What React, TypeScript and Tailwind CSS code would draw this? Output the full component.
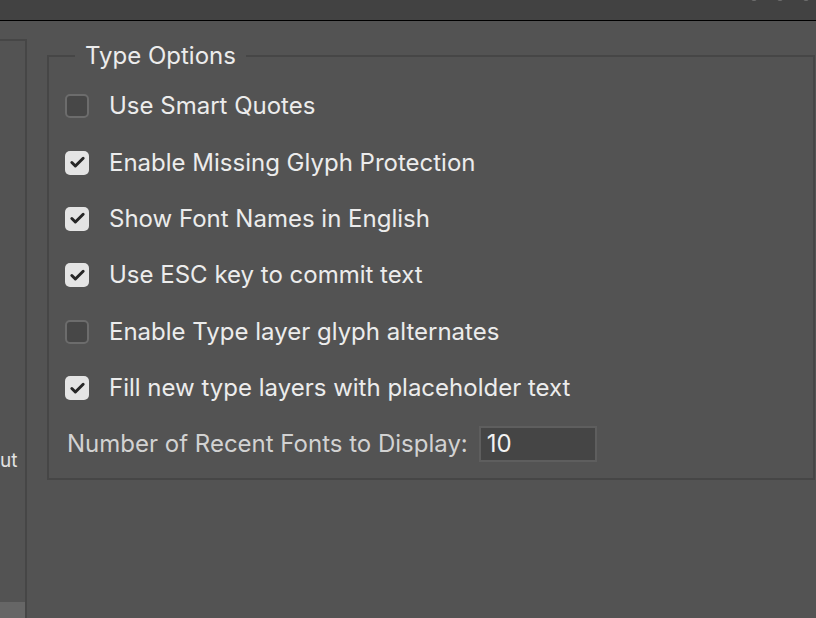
import { Check } from 'lucide-react';

const options = [
  { label: 'Use Smart Quotes', checked: false },
  { label: 'Enable Missing Glyph Protection', checked: true },
  { label: 'Show Font Names in English', checked: true },
  { label: 'Use ESC key to commit text', checked: true },
  { label: 'Enable Type layer glyph alternates', checked: false },
  { label: 'Fill new type layers with placeholder text', checked: true },
];

function CheckBox({ checked }: { checked: boolean }) {
  if (checked) {
    return (
      <div className="w-[24px] h-[24px] rounded-[5px] bg-[#e4e4e4] flex items-center justify-center shrink-0">
        <Check size={17} strokeWidth={4.2} className="text-[#262626]" />
      </div>
    );
  }
  return <div className="w-[24px] h-[24px] rounded-[5px] bg-[#474747] border-2 border-[#6c6c6c] shrink-0" />;
}

export default function App() {
  return (
    <div
      className="w-[816px] h-[618px] overflow-hidden bg-[#535353] flex flex-col"
      style={{ fontFamily: 'Inter, "Noto Sans", sans-serif' }}
    >
      <div className="h-[21px] shrink-0 bg-[#424242] border-b-[1.5px] border-black flex justify-end gap-[20px] pr-[7px] overflow-hidden">
        <span className="w-[6px] h-[6px] rounded-full bg-[#6e6e6e] -mt-[5px]" />
        <span className="w-[6px] h-[6px] rounded-full bg-[#6e6e6e] -mt-[5px]" />
        <span className="w-[6px] h-[6px] rounded-full bg-[#6e6e6e] -mt-[5px]" />
      </div>

      <div className="flex flex-1 min-h-0">
        {/* left list panel, mostly cut off */}
        <div className="w-[27px] shrink-0 mt-[18px] border-t-2 border-r-2 border-[#464646] flex flex-col overflow-hidden">
          <div className="mt-[407px] h-[26px] text-[19px] text-[#e2e2e2] leading-[26px] whitespace-nowrap">
            ut
          </div>
          <div className="mt-auto h-[16px] bg-[#666666]" />
        </div>

        <div className="flex-1 pl-[20px] pr-[1px] pt-[20px]">
          <fieldset className="border-2 border-[#464646] h-[439px] pl-[16px]">
            <legend className="ml-[10px] px-[10px] text-[24px] leading-[30px] text-[#ececec]">Type Options</legend>
            <div className="flex flex-col mt-[7px]">
              {options.map((o) => (
                <div key={o.label} className="h-[56.4px] flex items-center gap-[20px]">
                  <CheckBox checked={o.checked} />
                  <span className="text-[24px] text-[#ececec] whitespace-nowrap">{o.label}</span>
                </div>
              ))}
              <div className="h-[56px] flex items-center gap-[11px] pl-[2px]">
                <span className="text-[24px] text-[#d2d2d2] whitespace-nowrap">Number of Recent Fonts to Display:</span>
                <div className="w-[118px] h-[36px] bg-[#454545] border-2 border-[#5e5e5e] flex items-center px-[6px] text-[24px] text-[#f2f2f2]">
                  10
                </div>
              </div>
            </div>
          </fieldset>
        </div>
      </div>
    </div>
  );
}
